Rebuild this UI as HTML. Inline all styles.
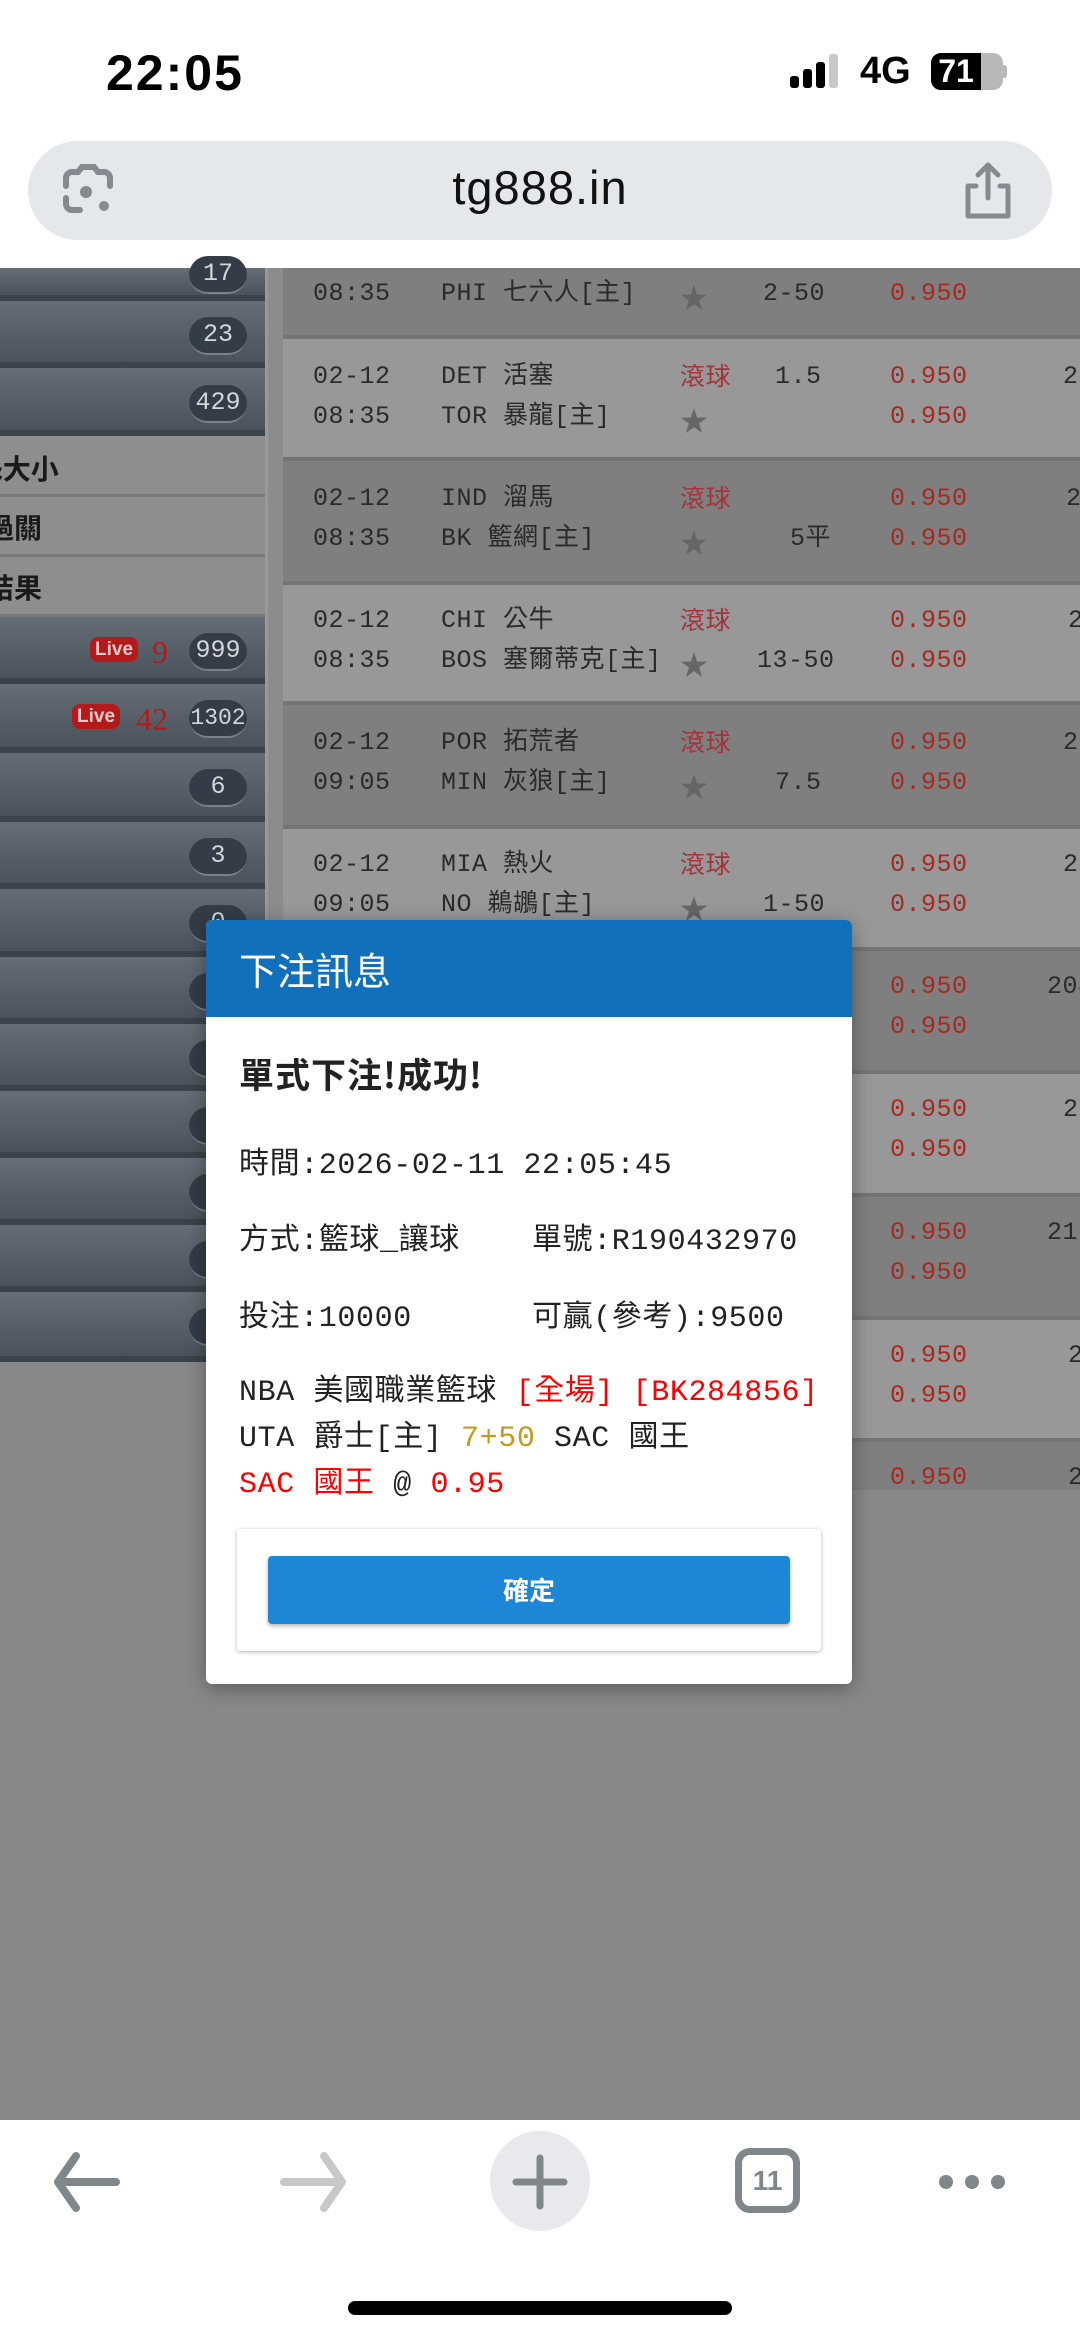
<!DOCTYPE html>
<html><head><meta charset="utf-8">
<style>
*{margin:0;padding:0;box-sizing:border-box}
body{width:1080px;height:2337px;overflow:hidden;position:relative;background:#888;font-family:"Liberation Sans","Noto Sans CJK TC",sans-serif}
.a{position:absolute}
.sr{position:absolute;left:0;width:265px;background:linear-gradient(#656d77,#4a525c);border-bottom:6px solid #3b424b}
.lr{position:absolute;left:0;width:265px;background:#8e8e8e;border-bottom:3px solid #797979;font-weight:bold;font-size:28px;color:#1a1a1a;font-family:"Noto Sans CJK TC",sans-serif}
.bd{position:absolute;left:189px;width:58px;height:38px;border-radius:19px;background:#343c47;border-bottom:2px solid #7a818a;color:#d4d6d8;font-size:25px;line-height:36px;text-align:center;font-family:"Liberation Mono",monospace;overflow:hidden}
.tr{position:absolute;left:283px;width:797px;border-bottom:4px solid #747474}
.d{background:#7f7f7f}.l{background:#989898}
.t{position:absolute;font-size:25px;color:#2a2a2a;white-space:nowrap;font-family:"Liberation Mono","Noto Sans CJK TC",monospace;line-height:30px;letter-spacing:0.5px}
.r{color:#a8281f}
.g{color:#a8303a;font-family:"Noto Sans CJK TC",sans-serif}
.st{position:absolute;color:#666;font-size:28px;line-height:30px}
.live{position:absolute;background:#b51a1a;color:#e8c8c8;font-weight:bold;font-size:19px;border-radius:8px;padding:0 5px;line-height:25px}
.ln{position:absolute;color:#b51a1a;font-family:"Liberation Serif",serif;font-size:32px;line-height:30px}
.m{position:absolute;font-size:30px;color:#222;white-space:nowrap;font-family:"Liberation Mono","Noto Sans CJK TC",monospace;letter-spacing:0.6px}
</style></head><body>
<div class="a" style="left:0;top:0;width:1080px;height:268px;background:#fff"></div>
<div class="a" style="left:106px;top:44px;font-size:50px;font-weight:bold;color:#000;letter-spacing:2px">22:05</div>
<svg class="a" style="left:788px;top:52px" width="60" height="40"><rect x="2" y="24" width="9" height="12" rx="3" fill="#000"/><rect x="15" y="17" width="9" height="19" rx="3" fill="#000"/><rect x="28" y="10" width="9" height="26" rx="3" fill="#000"/><rect x="41" y="2" width="9" height="34" rx="3" fill="#c8c8c8"/></svg>
<div class="a" style="left:860px;top:50px;font-size:38px;font-weight:bold;color:#000">4G</div>
<div class="a" style="left:931px;top:53px;width:72px;height:37px;border-radius:10px;background:#b8b8b8;overflow:hidden"><div style="width:50px;height:37px;background:#000;color:#fff;font-weight:bold;font-size:32px;line-height:37px;text-align:center">71</div></div>
<div class="a" style="left:1003px;top:65px;width:4px;height:13px;border-radius:0 3px 3px 0;background:#b8b8b8"></div>
<div class="a" style="left:28px;top:141px;width:1024px;height:99px;border-radius:50px;background:#e5e8eb"></div>
<div class="a" style="left:0;top:160px;width:1080px;text-align:center;font-size:47px;color:#111;letter-spacing:1px">tg888.in</div>
<svg class="a" style="left:60px;top:164px" width="56" height="54" viewBox="0 0 56 54"><path d="M6 22V14a6 6 0 0 1 6-6h6l4-5h12l4 5h6a6 6 0 0 1 6 6v8M6 34v6a6 6 0 0 0 6 6h8" fill="none" stroke="#848b90" stroke-width="6" stroke-linecap="round"/><circle cx="26" cy="28" r="6" fill="#848b90"/><circle cx="44" cy="42" r="5" fill="#848b90"/></svg>
<svg class="a" style="left:960px;top:162px" width="56" height="60" viewBox="0 0 56 60"><path d="M16 24H8v30h40V24h-8M28 36V4M18 13l10-10 10 10" fill="none" stroke="#848b90" stroke-width="5" stroke-linecap="round" stroke-linejoin="round"/></svg>

<div class="a" style="left:0;top:268px;width:1080px;height:1852px;background:#888"></div>
<div class="a" style="left:265px;top:268px;width:18px;height:1094px;background:#8c8c8c;border-left:3px solid #999"></div>

<div class="sr" style="top:268px;height:33px"></div><div class="bd" style="top:256px">17</div>
<div class="sr" style="top:301px;height:67px"></div><div class="bd" style="top:317px">23</div>
<div class="sr" style="top:368px;height:68px"></div><div class="bd" style="top:385px">429</div>
<div class="lr" style="top:436px;height:61px"><span class="a" style="left:-18px;top:12px">&amp;大小</span></div>
<div class="lr" style="top:497px;height:60px"><span class="a" style="left:-14px;top:10px">過關</span></div>
<div class="lr" style="top:557px;height:60px"><span class="a" style="left:-14px;top:10px">結果</span></div>
<div class="sr" style="top:617px;height:67px"></div><div class="bd" style="top:633px">999</div>
<span class="live" style="left:90px;top:637px">Live</span><span class="ln" style="left:152px;top:637px">9</span>
<div class="sr" style="top:684px;height:69px"></div><div class="bd" style="top:700px;font-size:23px">1302</div>
<span class="live" style="left:72px;top:704px">Live</span><span class="ln" style="left:136px;top:704px">42</span>
<div class="sr" style="top:753px;height:69px"></div><div class="bd" style="top:769px">6</div>
<div class="sr" style="top:822px;height:67px"></div><div class="bd" style="top:838px">3</div>
<div class="sr" style="top:889px;height:68px"></div><div class="bd" style="top:905px">0</div>
<div class="sr" style="top:957px;height:67px"></div><div class="bd" style="top:973px">5</div>
<div class="sr" style="top:1024px;height:67px"></div><div class="bd" style="top:1040px">9</div>
<div class="sr" style="top:1091px;height:67px"></div><div class="bd" style="top:1107px">5</div>
<div class="sr" style="top:1158px;height:67px"></div><div class="bd" style="top:1174px">4</div>
<div class="sr" style="top:1225px;height:67px"></div><div class="bd" style="top:1241px">1</div>
<div class="sr" style="top:1292px;height:70px"></div><div class="bd" style="top:1308px">1</div>

<div class="tr d" style="top:268px;height:71px"></div>
<div class="t" style="left:313px;top:279px">08:35</div><div class="t" style="left:441px;top:279px">PHI 七六人[主]</div><div class="st" style="left:680px;top:284px">★</div><div class="t" style="left:763px;top:279px">2-50</div><div class="t r" style="left:890px;top:279px">0.950</div>

<div class="tr l" style="top:339px;height:122px"></div>
<div class="tr d" style="top:461px;height:124px"></div>
<div class="tr l" style="top:585px;height:120px"></div>
<div class="tr d" style="top:705px;height:124px"></div>
<div class="tr l" style="top:829px;height:122px"></div>
<div class="tr d" style="top:951px;height:123px"></div>
<div class="tr l" style="top:1074px;height:123px"></div>
<div class="tr d" style="top:1197px;height:123px"></div>
<div class="tr l" style="top:1320px;height:122px"></div>
<div class="tr d" style="top:1442px;height:48px;border-bottom:none"></div>

<div class="t" style="left:313px;top:362px">02-12</div><div class="t" style="left:313px;top:402px">08:35</div>
<div class="t" style="left:441px;top:362px">DET 活塞</div><div class="t" style="left:441px;top:402px">TOR 暴龍[主]</div>
<div class="t g" style="left:680px;top:360px">滾球</div><div class="st" style="left:680px;top:407px">★</div>
<div class="t" style="left:775px;top:362px">1.5</div>
<div class="t r" style="left:890px;top:362px">0.950</div><div class="t r" style="left:890px;top:402px">0.950</div><div class="t" style="left:1063px;top:362px">220</div>

<div class="t" style="left:313px;top:484px">02-12</div><div class="t" style="left:313px;top:524px">08:35</div>
<div class="t" style="left:441px;top:484px">IND 溜馬</div><div class="t" style="left:441px;top:524px">BK 籃網[主]</div>
<div class="t g" style="left:680px;top:482px">滾球</div><div class="st" style="left:680px;top:529px">★</div>
<div class="t" style="left:790px;top:524px">5平</div>
<div class="t r" style="left:890px;top:484px">0.950</div><div class="t r" style="left:890px;top:524px">0.950</div><div class="t" style="left:1066px;top:484px">2</div>

<div class="t" style="left:313px;top:606px">02-12</div><div class="t" style="left:313px;top:646px">08:35</div>
<div class="t" style="left:441px;top:606px">CHI 公牛</div><div class="t" style="left:441px;top:646px">BOS 塞爾蒂克[主]</div>
<div class="t g" style="left:680px;top:604px">滾球</div><div class="st" style="left:680px;top:651px">★</div>
<div class="t" style="left:757px;top:646px">13-50</div>
<div class="t r" style="left:890px;top:606px">0.950</div><div class="t r" style="left:890px;top:646px">0.950</div><div class="t" style="left:1068px;top:606px">2</div>

<div class="t" style="left:313px;top:728px">02-12</div><div class="t" style="left:313px;top:768px">09:05</div>
<div class="t" style="left:441px;top:728px">POR 拓荒者</div><div class="t" style="left:441px;top:768px">MIN 灰狼[主]</div>
<div class="t g" style="left:680px;top:726px">滾球</div><div class="st" style="left:680px;top:773px">★</div>
<div class="t" style="left:775px;top:768px">7.5</div>
<div class="t r" style="left:890px;top:728px">0.950</div><div class="t r" style="left:890px;top:768px">0.950</div><div class="t" style="left:1063px;top:728px">22</div>

<div class="t" style="left:313px;top:850px">02-12</div><div class="t" style="left:313px;top:890px">09:05</div>
<div class="t" style="left:441px;top:850px">MIA 熱火</div><div class="t" style="left:441px;top:890px">NO 鵜鶘[主]</div>
<div class="t g" style="left:680px;top:848px">滾球</div><div class="st" style="left:680px;top:895px">★</div>
<div class="t" style="left:763px;top:890px">1-50</div>
<div class="t r" style="left:890px;top:850px">0.950</div><div class="t r" style="left:890px;top:890px">0.950</div><div class="t" style="left:1063px;top:850px">22</div>

<div class="t r" style="left:890px;top:972px">0.950</div><div class="t r" style="left:890px;top:1012px">0.950</div><div class="t" style="left:1047px;top:972px">208</div>
<div class="t r" style="left:890px;top:1095px">0.950</div><div class="t r" style="left:890px;top:1135px">0.950</div><div class="t" style="left:1063px;top:1095px">22</div>
<div class="t r" style="left:890px;top:1218px">0.950</div><div class="t r" style="left:890px;top:1258px">0.950</div><div class="t" style="left:1047px;top:1218px">217</div>
<div class="t r" style="left:890px;top:1341px">0.950</div><div class="t r" style="left:890px;top:1381px">0.950</div><div class="t" style="left:1068px;top:1341px">2</div>
<div class="t r" style="left:890px;top:1463px">0.950</div><div class="t" style="left:1068px;top:1463px">2</div>

<div class="a" style="left:206px;top:920px;width:646px;height:764px;background:#fff;border-radius:6px;box-shadow:0 4px 20px rgba(0,0,0,.35);overflow:hidden">
 <div style="height:97px;background:#1170bb;color:#fff;font-size:38px;line-height:97px;padding-left:33px;font-family:'Noto Sans CJK TC',sans-serif">下注訊息</div>
</div>
<div class="a" style="left:239px;top:1051px;font-size:35px;font-weight:bold;color:#222;font-family:'Noto Sans CJK TC',sans-serif;line-height:46px;letter-spacing:1px">單式下注!成功!</div>
<div class="m" style="left:239px;top:1138px">時間:2026-02-11 22:05:45</div>
<div class="m" style="left:239px;top:1214px">方式:籃球_讓球</div>
<div class="m" style="left:532px;top:1214px">單號:R190432970</div>
<div class="m" style="left:239px;top:1291px">投注:10000</div>
<div class="m" style="left:532px;top:1291px">可贏(參考):9500</div>
<div class="m" style="left:239px;top:1365px">NBA 美國職業籃球 <span style="color:#f00">[全場] [BK284856]</span></div>
<div class="m" style="left:239px;top:1411px">UTA 爵士[主] <span style="color:#c49a1c">7+50</span> SAC 國王</div>
<div class="m" style="left:239px;top:1457px"><span style="color:#f00">SAC 國王</span> @ <span style="color:#f00">0.95</span></div>
<div class="a" style="left:237px;top:1529px;width:584px;height:122px;background:#fff;border-radius:3px;box-shadow:0 1px 4px rgba(0,0,0,.3)"></div>
<div class="a" style="left:268px;top:1556px;width:522px;height:68px;background:#1e86d6;border-radius:4px;box-shadow:0 2px 4px rgba(0,0,0,.3);color:#fff;font-size:26px;font-weight:bold;text-align:center;line-height:68px;font-family:'Noto Sans CJK TC',sans-serif">確定</div>

<div class="a" style="left:0;top:2120px;width:1080px;height:217px;background:#fff"></div>
<svg class="a" style="left:50px;top:2150px" width="75" height="64" viewBox="0 0 75 64"><path d="M66 32H8M26 6L8 32l18 26" fill="none" stroke="#7f878b" stroke-width="8" stroke-linecap="round" stroke-linejoin="round"/></svg>
<svg class="a" style="left:278px;top:2150px" width="75" height="64" viewBox="0 0 75 64"><path d="M6 32h58M46 6l18 26-18 26" fill="none" stroke="#c8c8c8" stroke-width="8" stroke-linecap="round" stroke-linejoin="round"/></svg>
<div class="a" style="left:490px;top:2131px;width:100px;height:100px;border-radius:50%;background:#e8e9ec"></div>
<svg class="a" style="left:510px;top:2152px" width="60" height="60" viewBox="0 0 60 60"><path d="M30 6v48M6 30h48" stroke="#7f878b" stroke-width="7" stroke-linecap="round"/></svg>
<div class="a" style="left:735px;top:2148px;width:65px;height:65px;border:7px solid #7f878b;border-radius:15px;color:#7f878b;font-weight:bold;font-size:28px;text-align:center;line-height:51px">11</div>
<svg class="a" style="left:938px;top:2170px" width="68" height="24"><circle cx="8" cy="12" r="7" fill="#7f878b"/><circle cx="34" cy="12" r="7" fill="#7f878b"/><circle cx="60" cy="12" r="7" fill="#7f878b"/></svg>
<div class="a" style="left:348px;top:2301px;width:384px;height:14px;border-radius:7px;background:#000"></div>
</body></html>
